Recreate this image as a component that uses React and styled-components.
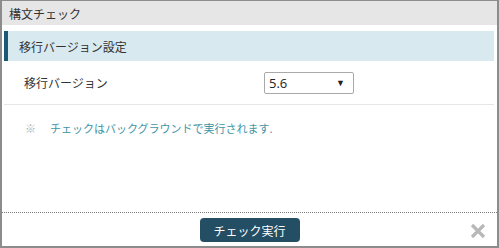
import React from "react";
import styled, { createGlobalStyle } from "styled-components";

const Global = createGlobalStyle`
  html, body { margin: 0; padding: 0; background: #fff; }
  body { font-family: "Noto Sans CJK JP", "Noto Sans", sans-serif; color: #333; }
`;

const Dialog = styled.div`
  box-sizing: border-box;
  width: 499px;
  height: 248px;
  border: 2px solid #8c8c8c;
  border-top-width: 1px;
  display: flex;
  flex-direction: column;
  background: #fff;
`;

const TitleBar = styled.div`
  height: 24px;
  background: #e6e6e6;
  display: flex;
  align-items: center;
  padding-left: 7px;
  font-size: 12px;
  color: #333;
`;

const Body = styled.div`
  flex: 1;
  padding: 6px 3px 0 2px;
  display: flex;
  flex-direction: column;
`;

const SectionHead = styled.div`
  height: 30px;
  background: #d9e9f0;
  border-left: 4px solid #1b5873;
  display: flex;
  align-items: center;
  padding-left: 11px;
  font-size: 12px;
  color: #333;
`;

const Row = styled.div`
  height: 43px;
  display: grid;
  grid-template-columns: 260px 1fr;
  align-items: center;
  border-bottom: 1px solid #e6e6e6;
`;

const Label = styled.div`
  padding-left: 20px;
  font-size: 12px;
  color: #333;
`;

const Select = styled.div`
  box-sizing: border-box;
  width: 90px;
  height: 22px;
  border: 1px solid #a9a9a9;
  border-radius: 2px;
  display: flex;
  align-items: center;
  justify-content: space-between;
  padding: 0 8px 0 4px;
  font-family: "Open Sans", "Noto Sans", sans-serif;
  font-size: 13px;
  color: #222;
`;

const Arrow = styled.span`
  font-size: 9px;
  color: #222;
`;

const Note = styled.div`
  padding: 15px 0 0 21px;
  display: flex;
  gap: 14px;
  font-size: 11px;
  color: #3f95a7;
`;

const Mark = styled.span`
  color: #9fb4bb;
`;

const Footer = styled.div`
  height: 33px;
  border-top: 1px dotted #7a7a7a;
  display: flex;
  align-items: center;
  justify-content: center;
  position: relative;
`;

const RunButton = styled.button`
  width: 100px;
  height: 24px;
  margin-top: 1px;
  border: none;
  border-radius: 4px;
  background: #234e63;
  color: #fff;
  font-family: "Noto Sans CJK JP", sans-serif;
  font-size: 12px;
  padding: 0;
`;

const Close = styled.svg`
  position: absolute;
  right: 11px;
  top: 10px;
`;

export default function App() {
  return (
    <>
      <Global />
      <Dialog>
        <TitleBar>構文チェック</TitleBar>
        <Body>
          <SectionHead>移行バージョン設定</SectionHead>
          <Row>
            <Label>移行バージョン</Label>
            <Select>
              <span>5.6</span>
              <Arrow>▼</Arrow>
            </Select>
          </Row>
          <Note>
            <Mark>※</Mark>
            <span>チェックはバックグラウンドで実行されます.</span>
          </Note>
        </Body>
        <Footer>
          <RunButton>チェック実行</RunButton>
          <Close width="16" height="16" viewBox="0 0 16 16">
            <path d="M2 2 L14 14 M14 2 L2 14" stroke="#b8b8b8" strokeWidth="3.2" strokeLinecap="butt" />
          </Close>
        </Footer>
      </Dialog>
    </>
  );
}
